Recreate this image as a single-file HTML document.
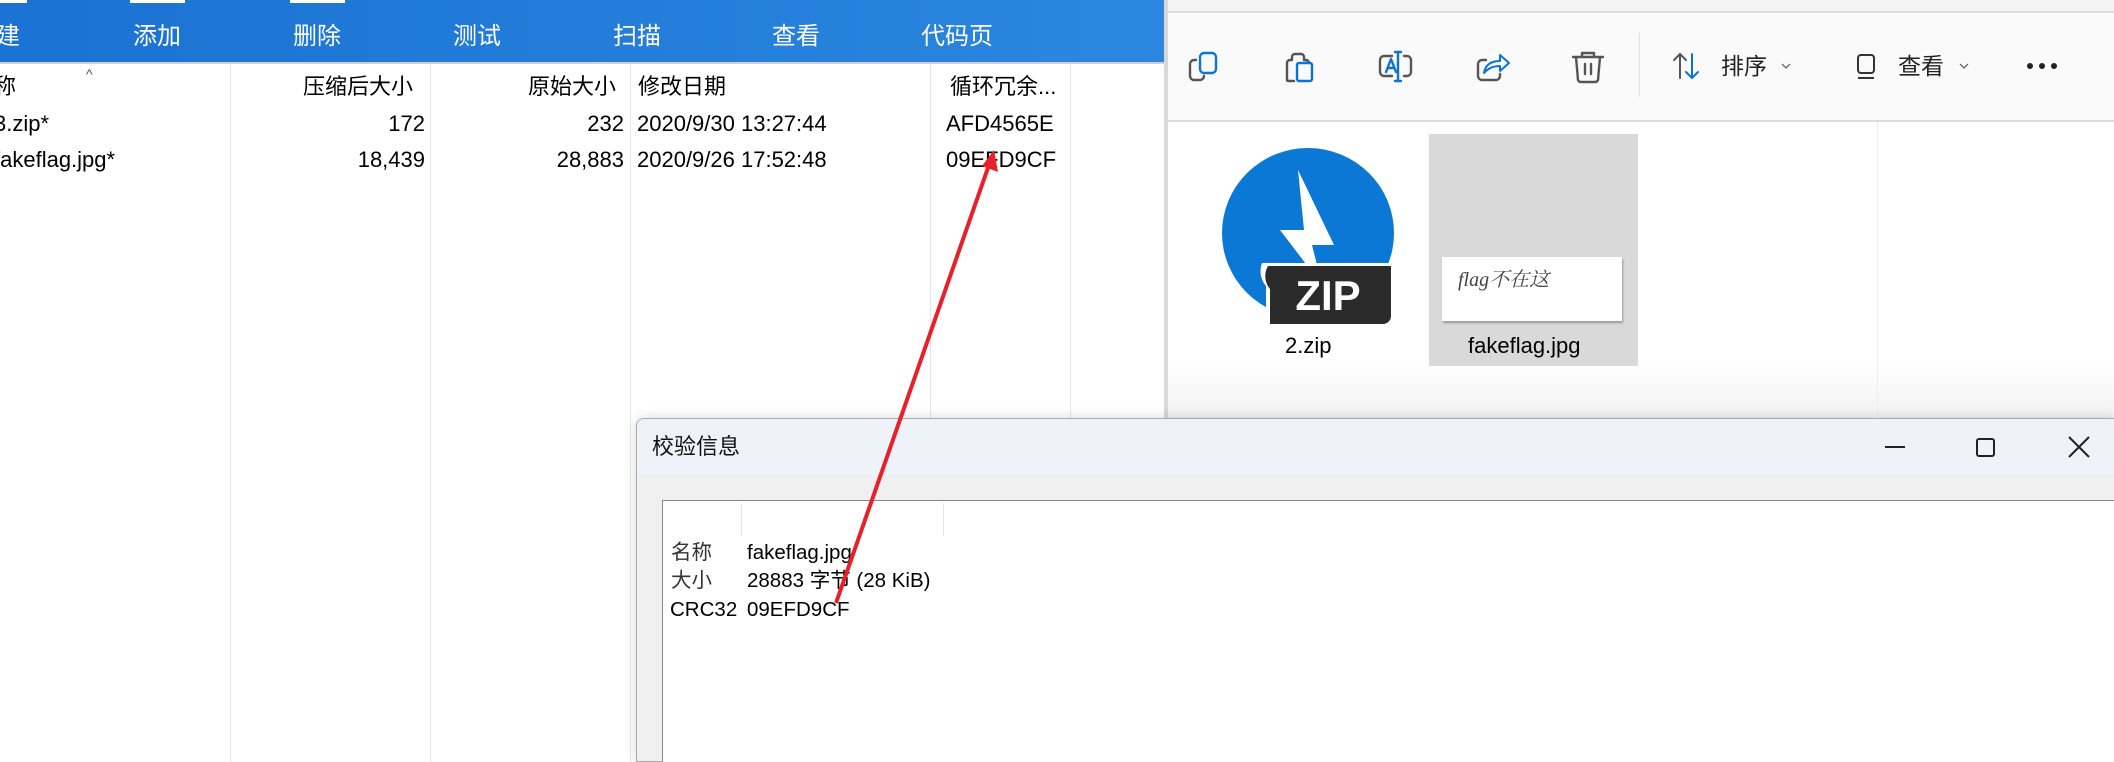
<!DOCTYPE html>
<html><head><meta charset="utf-8"><style>
*{margin:0;padding:0;box-sizing:border-box}
body{width:2114px;height:762px;overflow:hidden;background:#fff;position:relative;font-family:"Liberation Sans","Noto Sans CJK SC",sans-serif;color:#000}
.a{position:absolute;white-space:nowrap;line-height:28px}
.tb{font-size:24px;color:#fff;top:23px}
.hd{font-size:22px;top:73px}
.r{font-size:22px}
.vl{position:absolute;width:1px;background:#e6e6e6;top:64px;height:698px}
.dt{font-size:20.5px;line-height:24px}
</style></head><body>
<!-- left window -->
<div class="a" style="left:0;top:0;width:1167px;height:62px;background:linear-gradient(90deg,#1a72d2,#2b87df)"></div>
<div class="a" style="left:0;top:0;width:27px;height:3px;background:#fff"></div>
<div class="a" style="left:130px;top:0;width:55px;height:3px;background:#fff"></div>
<div class="a" style="left:290px;top:0;width:55px;height:3px;background:#fff"></div>
<div class="a" style="left:0;top:62px;width:1167px;height:2px;background:#d0d0d0"></div>
<div class="a tb" style="left:-4px">建</div>
<div class="a tb" style="left:133px">添加</div>
<div class="a tb" style="left:293px">删除</div>
<div class="a tb" style="left:453px">测试</div>
<div class="a tb" style="left:613px">扫描</div>
<div class="a tb" style="left:772px">查看</div>
<div class="a tb" style="left:921px">代码页</div>
<div class="vl" style="left:230px"></div><div class="vl" style="left:430px"></div><div class="vl" style="left:630px"></div><div class="vl" style="left:930px"></div><div class="vl" style="left:1070px"></div>
<div class="a" style="left:86px;top:60px;font-size:14px;color:#555">^</div>
<div class="a hd" style="left:-6px">称</div>
<div class="a hd" style="left:303px">压缩后大小</div>
<div class="a hd" style="left:528px">原始大小</div>
<div class="a hd" style="left:638px">修改日期</div>
<div class="a hd" style="left:950px">循环冗余...</div>
<div class="a r" style="left:-6px;top:110px">3.zip*</div>
<div class="a r" style="left:-6px;top:146px">fakeflag.jpg*</div>
<div class="a r" style="left:320px;top:110px;width:105px;text-align:right">172</div>
<div class="a r" style="left:320px;top:146px;width:105px;text-align:right">18,439</div>
<div class="a r" style="left:520px;top:110px;width:104px;text-align:right">232</div>
<div class="a r" style="left:520px;top:146px;width:104px;text-align:right">28,883</div>
<div class="a r" style="left:637px;top:110px">2020/9/30 13:27:44</div>
<div class="a r" style="left:637px;top:146px">2020/9/26 17:52:48</div>
<div class="a r" style="left:946px;top:110px">AFD4565E</div>
<div class="a r" style="left:946px;top:146px">09EFD9CF</div>
<!-- right window -->
<div class="a" style="left:1164px;top:0;width:4px;height:420px;background:#d8d8d8"></div>
<div class="a" style="left:1168px;top:0;width:946px;height:11px;background:#f3f3f3"></div>
<div class="a" style="left:1168px;top:11px;width:946px;height:2px;background:#dcdcdc"></div>
<div class="a" style="left:1168px;top:13px;width:946px;height:107px;background:#fafafa"></div>
<div class="a" style="left:1168px;top:120px;width:946px;height:2px;background:#dcdcdc"></div>
<div class="a" style="left:1168px;top:122px;width:946px;height:298px;background:linear-gradient(#fff 80%,#f2f2f2)"></div>
<div class="a" style="left:1877px;top:122px;width:1px;height:298px;background:#eee"></div>
<div class="a" style="left:1639px;top:33px;width:1px;height:64px;background:#e0e0e0"></div>
<svg class="a" style="left:1180px;top:40px" width="440" height="50" viewBox="0 0 440 50" fill="none" stroke-width="2.4" stroke-linecap="round" stroke-linejoin="round">
<path d="M16 20 h-2 a4 4 0 0 0 -4 4 v12 a4 4 0 0 0 4 4 h6 a4 4 0 0 0 4 -4" stroke="#555"/>
<rect x="20" y="13" width="16" height="20" rx="4" stroke="#0a74d6"/>
<path d="M112 20 h-2 a3 3 0 0 0 -3 3 v17 a1 1 0 0 0 1 1 h6 M112 20 v-3 a3 3 0 0 1 3 -3 h6 a3 3 0 0 1 3 3 v3 M124 20 h2 a3 3 0 0 1 3 3 v0" stroke="#555"/>
<rect x="117" y="23" width="15" height="18" rx="2" stroke="#0a74d6"/>
<path d="M212 16 h-8 a4 4 0 0 0 -4 4 v12 a4 4 0 0 0 4 4 h8 M224 16 h3 a4 4 0 0 1 4 4 v12 a4 4 0 0 1 -4 4 h-3" stroke="#555"/>
<path d="M206 32 l5 -13 l5 13 M208 28 h6 M218 12 v29 M215 12 h6 M215 41 h6" stroke="#0a74d6"/>
<path d="M306 20 h-4 a4 4 0 0 0 -4 4 v12 a4 4 0 0 0 4 4 h14 a4 4 0 0 0 4 -4 v-2" stroke="#555"/>
<path d="M304 33 q2 -12 16 -12 v-6 l9 8 l-9 8 v-5 q-10 0 -16 7z" stroke="#0a74d6" stroke-width="2"/>
<path d="M393 17 h30 M402 17 v-4 h12 v4 M396 17 l2 23 a3 3 0 0 0 3 2 h14 a3 3 0 0 0 3 -2 l2 -23 M405 24 v10 M411 24 v10" stroke="#555"/>
</svg>
<svg class="a" style="left:1672px;top:50px" width="30" height="32" viewBox="0 0 30 32" fill="none" stroke-width="2" stroke-linecap="round" stroke-linejoin="round"><path d="M8 28 V4 M2 10 l6 -6 l6 6" stroke="#555"/><path d="M20 4 v24 M14 22 l6 6 l6 -6" stroke="#0a74d6"/></svg>
<div class="a" style="left:1721px;top:52px;font-size:23px;color:#222">排序</div>
<svg class="a" style="left:1781px;top:62px" width="10" height="8"><path d="M1 2 L5 6 L9 2" stroke="#666" stroke-width="1.3" fill="none"/></svg>
<svg class="a" style="left:1856px;top:52px" width="20" height="28" viewBox="0 0 20 28" fill="none" stroke="#333" stroke-width="2"><rect x="2" y="3" width="16" height="18" rx="3"/><path d="M2 26 h16"/></svg>
<div class="a" style="left:1898px;top:52px;font-size:23px;color:#222">查看</div>
<svg class="a" style="left:1959px;top:62px" width="10" height="8"><path d="M1 2 L5 6 L9 2" stroke="#666" stroke-width="1.3" fill="none"/></svg>
<div class="a" style="left:2027px;width:6px;height:6px;border-radius:3px;background:#222;box-shadow:12px 0 #222,24px 0 #222;top:63px"></div>
<!-- zip icon -->
<svg class="a" style="left:1222px;top:145px" width="180" height="180" viewBox="0 0 180 180">
<ellipse cx="86" cy="85" rx="86" ry="85" fill="#0b78d6" transform="translate(0,3)"/>
<path d="M76 25 L112 100 L90 100 L100 140 L58 85 L82 85 Z" fill="#fff"/>
<path d="M40 118 h132 v55 a8 8 0 0 1 -8 8 h-120 v-40 a23 23 0 0 1 -4 -23z" fill="#fff"/>
<path d="M46 121 h123 v50 a8 8 0 0 1 -8 8 h-113 v-35 a20 20 0 0 1 -2 -23z" fill="#2b2b2b"/>
<text x="106" y="165" text-anchor="middle" font-family="Liberation Sans" font-weight="bold" font-size="42" fill="#fff">ZIP</text>
</svg>
<div class="a" style="left:1285px;top:332px;font-size:22px">2.zip</div>
<div class="a" style="left:1429px;top:134px;width:209px;height:232px;background:#d9d9d9"></div>
<div class="a" style="left:1442px;top:257px;width:180px;height:64px;background:#fff;box-shadow:1px 2px 2px #999"></div>
<div class="a" style="left:1458px;top:266px;font-size:20px;color:#444;font-family:'Liberation Serif','Noto Serif CJK SC',serif;font-style:italic">flag不在这</div>
<div class="a" style="left:1468px;top:332px;font-size:22px">fakeflag.jpg</div>
<!-- dialog -->
<div class="a" style="left:636px;top:418px;width:1480px;height:344px;border:1px solid #aaa;border-radius:8px 0 0 0;background:#f0f0f0;box-shadow:0 0 12px rgba(0,0,0,.15)"></div>
<div class="a" style="left:637px;top:419px;width:1477px;height:56px;background:#eef2f9;border-radius:7px 0 0 0"></div>
<div class="a" style="left:652px;top:433px;font-size:22px;color:#111">校验信息</div>
<div class="a" style="left:1885px;top:446px;width:20px;height:2px;background:#222"></div>
<div class="a" style="left:1976px;top:438px;width:19px;height:19px;border:2px solid #222;border-radius:3px"></div>
<svg class="a" style="left:2068px;top:436px" width="22" height="22"><path d="M1 1 L21 21 M21 1 L1 21" stroke="#222" stroke-width="2"/></svg>
<div class="a" style="left:662px;top:500px;width:1452px;height:262px;background:#fff;border:1px solid #888;border-right:none;border-bottom:none"></div>
<div class="a" style="left:741px;top:503px;width:1px;height:33px;background:#e6e6e6"></div>
<div class="a" style="left:943px;top:503px;width:1px;height:33px;background:#e6e6e6"></div>
<div class="a dt" style="left:671px;top:541px;color:#333">名称</div>
<div class="a dt" style="left:747px;top:541px">fakeflag.jpg</div>
<div class="a dt" style="left:671px;top:569px;color:#333">大小</div>
<div class="a dt" style="left:747px;top:569px">28883 字节 (28 KiB)</div>
<div class="a dt" style="left:670px;top:598px">CRC32</div>
<div class="a dt" style="left:747px;top:598px">09EFD9CF</div>
<!-- arrow -->
<svg class="a" style="left:0;top:0" width="2114" height="762"><line x1="836" y1="603" x2="990" y2="162" stroke="#e8202a" stroke-width="4"/><path d="M994 150 L998 172 L982 166 Z" fill="#e8202a"/></svg>
</body></html>
